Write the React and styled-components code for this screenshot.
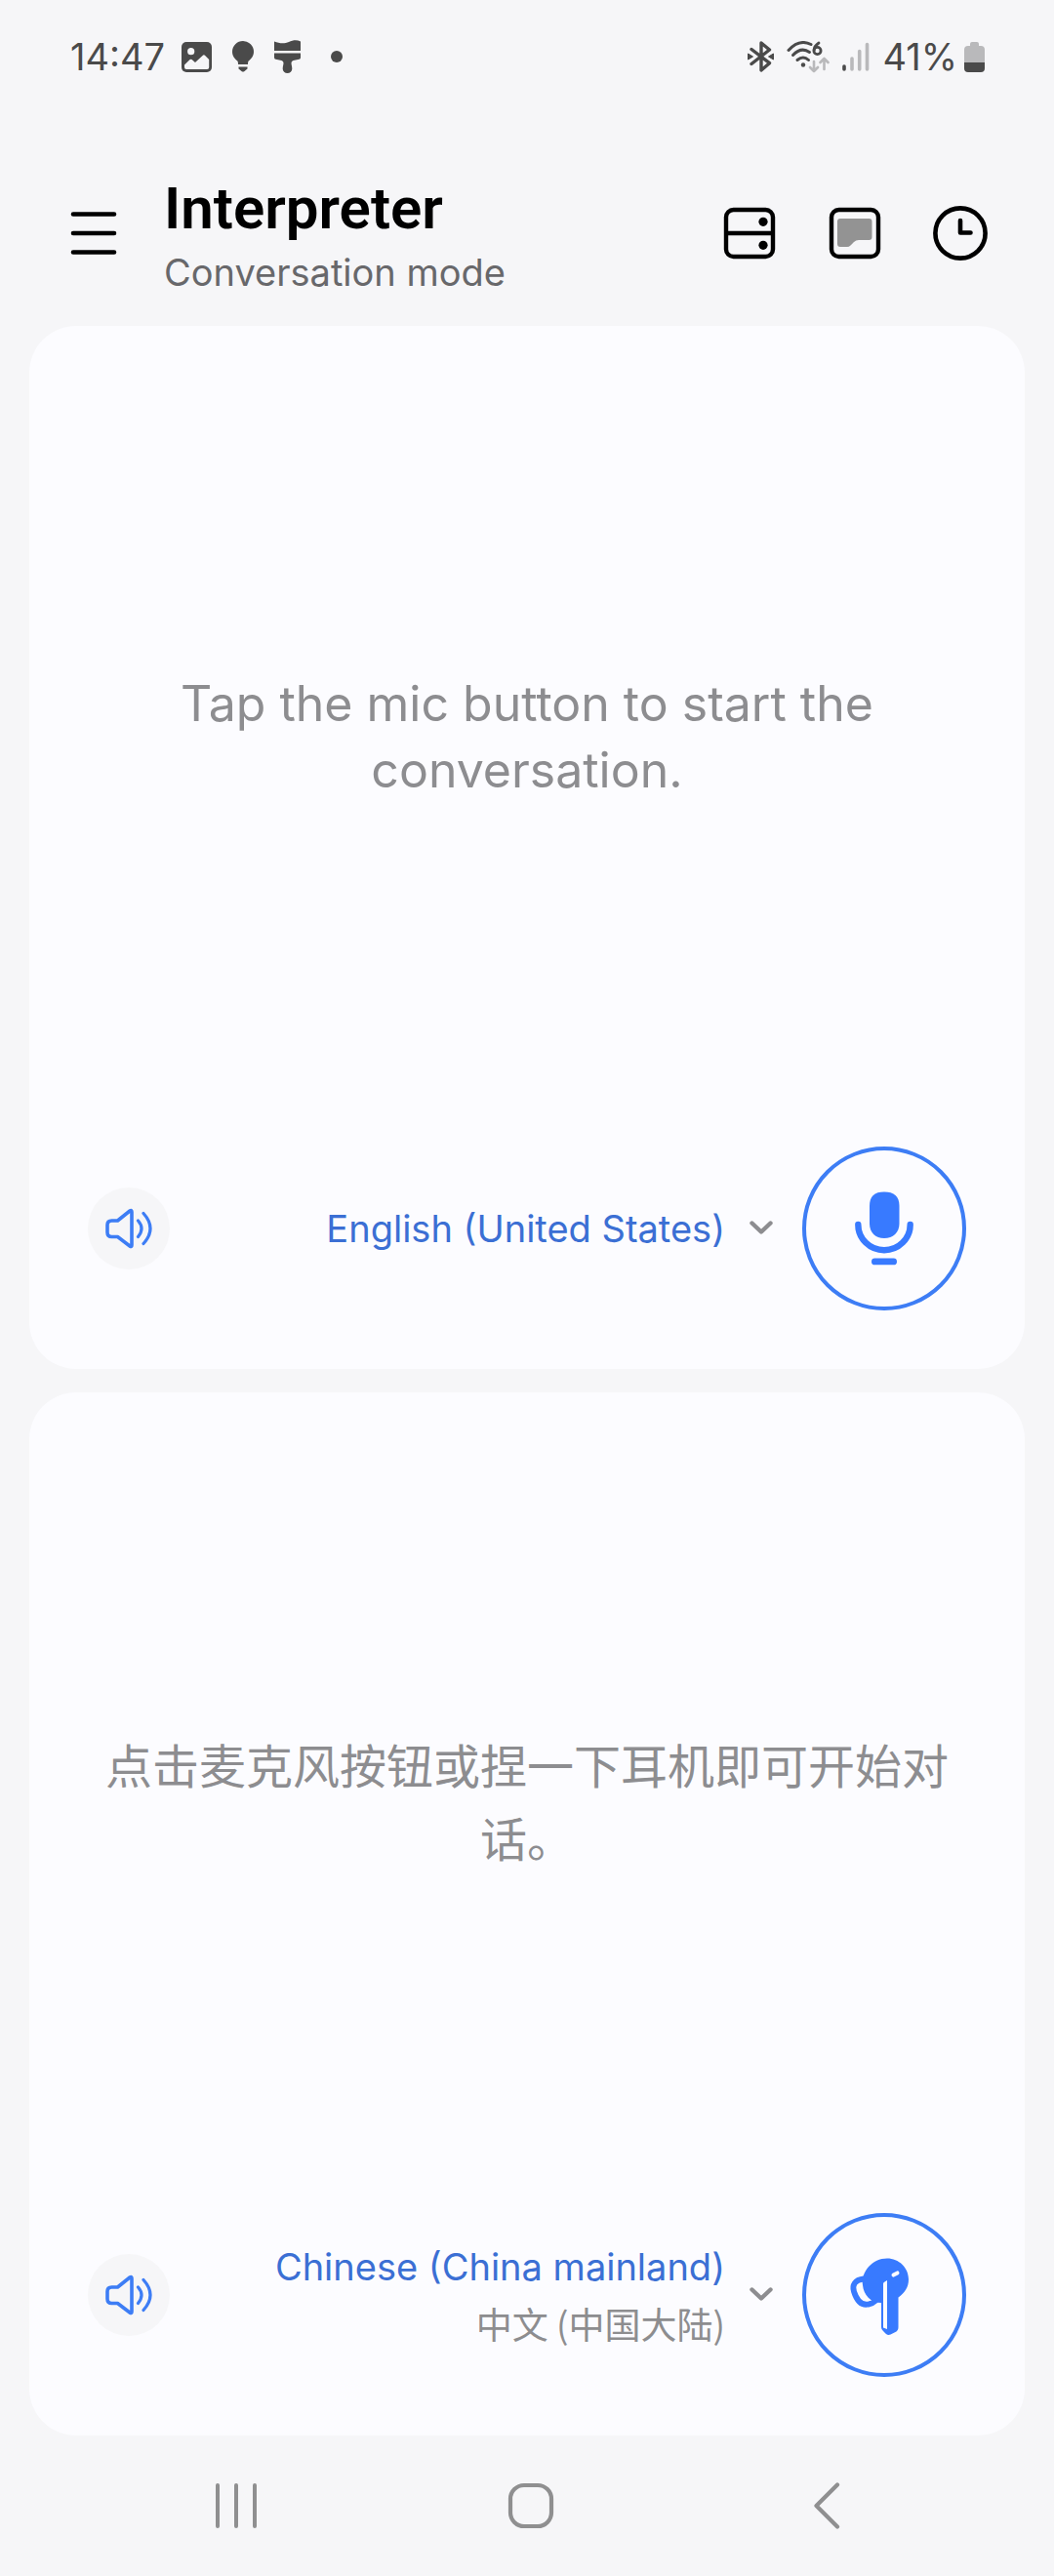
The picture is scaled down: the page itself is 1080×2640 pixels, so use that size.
import React from 'react'
import styled, { createGlobalStyle } from 'styled-components'

const GlobalStyle = createGlobalStyle`
  * {
    box-sizing: border-box;
  }

  body {
    margin: 0;
    background: #f6f6f8;
    font-family: Inter, 'Noto Sans CJK SC', sans-serif;
  }

  button, select {
    margin: 0;
    padding: 0;
    border: 0;
    background: none;
    font: inherit;
    color: inherit;
    cursor: pointer;
  }

  svg {
    display: block;
    flex: none;
  }
`

const Page = styled.div`
  display: flex;
  flex-direction: column;
  min-height: 100vh;
`

const StatusBar = styled.div`
  display: flex;
  align-items: center;
  justify-content: space-between;
  height: 116px;
  padding: 0 71px 0 72px;
  color: #4a4a4a;
  font-size: 38px;
  line-height: 48px;
`

const StatusGroup = styled.div`
  display: flex;
  align-items: center;
  gap: ${({ $gap }) => $gap}px;
`

const Header = styled.header`
  display: flex;
  align-items: center;
  padding: 63px 66px 35px;
`

const IconButton = styled.button`
  display: flex;
  align-items: center;
  justify-content: center;
  width: 60px;
  height: 60px;
`

const Titles = styled.div`
  flex: 1;
  margin-left: 42px;
`

const Title = styled.h1`
  margin: 0 0 10px;
  font-family: Roboto, sans-serif;
  font-size: 60px;
  font-weight: 600;
  line-height: 70px;
  color: #000;
`

const Subtitle = styled.p`
  margin: 0;
  font-size: 38px;
  line-height: 40px;
  color: #68686b;
`

const Actions = styled.div`
  display: flex;
  gap: 48px;
`

const Panels = styled.main`
  display: grid;
  flex: 1;
  grid-auto-rows: 1fr;
  gap: 24px;
  padding: 0 30px;
`

const Panel = styled.section`
  display: flex;
  flex-direction: column;
  padding: 0 60px 60px;
  border-radius: 48px;
  background: #fcfcff;
`

const Message = styled.div`
  display: flex;
  flex: 1;
  align-items: center;
  justify-content: center;
  font-size: ${({ $cjk }) => ($cjk ? 48 : 50)}px;
  line-height: ${({ $cjk }) => ($cjk ? 75 : 68)}px;
  text-align: center;
  color: #8d8d90;
`

const MessageText = styled.p`
  margin: 0;
`

const Controls = styled.div`
  display: flex;
  align-items: center;
`

const SpeakerButton = styled.button`
  display: flex;
  align-items: center;
  justify-content: center;
  width: 84px;
  height: 84px;
  border-radius: 50%;
  background: #f6f6f8;
`

const Language = styled.label`
  display: flex;
  flex: 1;
  align-items: center;
  justify-content: flex-end;
  gap: 25px;
  margin-right: 30px;
`

const LanguageNames = styled.span`
  display: flex;
  flex: 1;
  flex-direction: column;
  gap: 10px;
`

const LanguageSelect = styled.select`
  appearance: none;
  width: 100%;
  height: 48px;
  font-size: 38px;
  line-height: 48px;
  text-align: right;
  text-align-last: right;
  color: #3b6fd4;
`

const NativeName = styled.span`
  font-family: 'Noto Sans CJK SC', sans-serif;
  font-size: 37px;
  line-height: 48px;
  text-align: right;
  color: #8d8d8f;
`

const TalkButton = styled.button`
  display: flex;
  align-items: center;
  justify-content: center;
  width: 168px;
  height: 168px;
  border: 4px solid #3d7df5;
  border-radius: 50%;
`

const NavBar = styled.nav`
  display: grid;
  grid-template-columns: repeat(3, 1fr);
  align-items: center;
  justify-items: center;
  height: 144px;
  padding: 0 82px 0 91px;
`

const PictureIcon = () => (
  <svg width="31" height="31" viewBox="0 0 31 31">
    <rect width="31" height="31" rx="5" fill="#4a4a4a" />
    <circle cx="9.7" cy="9.7" r="3.6" fill="#f6f6f8" />
    <path
      d="M3 23.500l5.600-5.400q1-.9 2 0l3.400 3 7.600-7.200q1.300-1.100 2.600 0l4 4.200V26q0 2-2 2H5q-2 0-2-2z"
      fill="#f6f6f8"
    />
  </svg>
)

const BulbIcon = () => (
  <svg width="22" height="32" viewBox="0 0 22 32" fill="#4a4a4a">
    <path d="M11 0a11 11 0 0 1 11 11c0 4.500-2.500 7.200-5 9.200-.8.700-1 1.600-1 3.800H6c0-2.200-.2-3.100-1-3.800C2.500 18.200 0 15.500 0 11A11 11 0 0 1 11 0z" />
    <path d="M6.500 26.500h9v2l-3 2.500q-1.500 1-3 0l-3-2.500z" />
  </svg>
)

const BrushIcon = () => (
  <svg width="27" height="34" viewBox="0 0 27 34" fill="#4a4a4a">
    <path d="M0 1.500C6 4 11 3.600 15 2c4-1.700 8-2.400 12-.5V11H0z" />
    <path d="M0 13.500h27V18q0 1.500-1.500 1.700l-6 1.200q-2 .5-2 2.500c0 2 .8 3.500.8 6a4.800 4.600 0 0 1-9.600 0c0-2.500.8-4 .8-6q0-2-2-2.500l-6-1.200Q0 19.500 0 18z" />
  </svg>
)

const DotIcon = () => (
  <svg width="22" height="12" viewBox="-10 0 22 12">
    <circle cx="6" cy="6" r="6" fill="#4a4a4a" />
  </svg>
)

const BluetoothIcon = () => (
  <svg width="27" height="32" viewBox="0 0 27 32">
    <path
      d="M4 8.500l18.500 14.200-8.500 7.300V2l8.500 7L4 23.500"
      fill="none"
      stroke="#4a4a4a"
      strokeWidth="3.400"
      strokeLinecap="round"
      strokeLinejoin="round"
    />
    <path d="M.5 13L5.500 16 .5 19zM26.500 13L21.500 16l5 3z" fill="#4a4a4a" stroke="#4a4a4a" strokeLinejoin="round" />
  </svg>
)

const WifiIcon = () => (
  <svg width="44" height="33" viewBox="0 0 44 33" fill="none" strokeLinecap="round" strokeLinejoin="round">
    <g stroke="#4a4a4a" strokeWidth="3">
      <path d="M2 9.500Q13-2.500 25 3.500" />
      <path d="M6.500 14.500Q15 5.500 23.500 11.500" />
      <path d="M11 19.500q6-5 11.500 0" />
      <path d="M33 2c-3 2-4.800 4.800-4.800 7.200" strokeWidth="2.800" />
      <circle cx="31.500" cy="10" r="3.600" strokeWidth="2.800" />
    </g>
    <circle cx="17" cy="24.500" r="2.200" fill="#4a4a4a" />
    <path d="M28 21v10m-4-4l4 4 4-4M38.500 29V18m-4 4l4-4 4 4" stroke="#b9b9bb" strokeWidth="2.600" />
  </svg>
)

const SignalIcon = () => (
  <svg width="28" height="30" viewBox="0 0 28 30" strokeWidth="3.600" strokeLinecap="round">
    <path d="M2 25v3" stroke="#4a4a4a" />
    <path d="M10 17v11M17.700 9.500V28M25.500 2.500V28" stroke="#b9b9bb" />
  </svg>
)

const BatteryIcon = () => (
  <svg width="21" height="31" viewBox="0 0 21 31">
    <path d="M0 21V8q0-4 4-4h2V2q0-2 2-2h5q2 0 2 2v2h2q4 0 4 4v13z" fill="#b9b9bb" />
    <path d="M0 21h21v6q0 4-4 4H4q-4 0-4-4z" fill="#4a4a4a" />
  </svg>
)

const MenuIcon = () => (
  <svg width="48" height="48" viewBox="0 0 48 48">
    <path d="M3 4.500h42M3 24h42M3 43.500h42" stroke="#000" strokeWidth="4.600" strokeLinecap="round" />
  </svg>
)

const SplitIcon = () => (
  <svg width="54" height="54" viewBox="0 0 54 54">
    <rect x="3" y="3" width="48" height="48" rx="7.500" fill="none" stroke="#000" strokeWidth="4.400" />
    <path d="M3 27h48" stroke="#000" strokeWidth="4.400" />
    <circle cx="41" cy="15.300" r="4.600" />
    <circle cx="41" cy="39.300" r="4.600" />
  </svg>
)

const BubbleIcon = () => (
  <svg width="54" height="54" viewBox="0 0 54 54">
    <rect x="3" y="3" width="48" height="48" rx="7.500" fill="none" stroke="#000" strokeWidth="4.400" />
    <path
      d="M9 15q0-3 3-3h29.500q3 0 3 3v16q0 3-3 3H31q-3 0-5 2l-3.500 3.500Q21 41 19 41h-7q-3 0-3-3z"
      fill="#939393"
    />
  </svg>
)

const ClockIcon = () => (
  <svg width="56" height="56" viewBox="0 0 56 56" fill="none" stroke="#000" strokeWidth="4.600">
    <circle cx="28" cy="28" r="25.600" />
    <path d="M28 15v12.500h10.500" strokeLinecap="round" strokeLinejoin="round" />
  </svg>
)

const SpeakerIcon = () => (
  <svg
    width="48"
    height="42"
    viewBox="0 0 48 42"
    fill="none"
    stroke="#3d7df5"
    strokeWidth="3.600"
    strokeLinecap="round"
    strokeLinejoin="round">
    <path d="M6.500 13H12.500L25 3q2-1.500 2 1V38q0 2.500-2 1L12.500 29.500H6.500Q2 29.500 2 25V17.500Q2 13 6.500 13z" />
    <path d="M33.500 13q7 8 0 16.500M39 5.500q14 15.500 0 31" strokeWidth="3.200" />
  </svg>
)

const ChevronIcon = () => (
  <svg width="24" height="20" viewBox="0 0 24 20">
    <path
      d="M2.500 4.500L12 13.500l9.500-9"
      fill="none"
      stroke="#8d8d90"
      strokeWidth="4.400"
      strokeLinecap="round"
      strokeLinejoin="round"
    />
  </svg>
)

const MicIcon = () => (
  <svg width="60" height="76" viewBox="0 0 60 76" fill="#387aff">
    <path d="M15 15C15 5 20 .500 30 .500S45.500 5 45.500 15v18C45.500 42 39 48 30 48S15 42 15 33z" />
    <path
      d="M3.300 34a26.700 26.200 0 0 0 53.400 0"
      fill="none"
      stroke="#387aff"
      strokeWidth="6.400"
      strokeLinecap="round"
    />
    <rect x="17" y="68.500" width="26" height="6.800" rx="3.400" />
  </svg>
)

const EarbudIcon = () => (
  <svg width="72" height="84" viewBox="0 -4 72 84">
    <path
      d="M15 21.500C6 22.500 2.800 28 5 34.500 8 44 13 49 20 47.500q4-.500 7-3.500"
      fill="none"
      stroke="#387aff"
      strokeWidth="5.800"
      strokeLinecap="round"
    />
    <path
      d="M39 .500C51 .500 61 10 61 22c0 8-4 14-10.500 18.500V71q0 3.500-3 5l-5 2.500q-2.500 1-4.500-.500l-3-3q-2-1.500-2-4V46C22 46 15 38 14 28 12 14 24 .500 39 .500z"
      fill="#387aff"
    />
    <path d="M35 71.500V26.500q0-1 1.200-1.700l2.800-1.700v50z" fill="#fcfcff" />
    <path d="M45.500 17.600l4-2.200" stroke="#fcfcff" strokeWidth="4" strokeLinecap="round" />
  </svg>
)

const RecentsIcon = () => (
  <svg width="44" height="48" viewBox="0 0 44 48">
    <path d="M3 3v42M22 3v42M41 3v42" stroke="#8f8f90" strokeWidth="4" strokeLinecap="round" />
  </svg>
)

const HomeIcon = () => (
  <svg width="48" height="48" viewBox="0 0 48 48">
    <rect x="3" y="3" width="42" height="42" rx="14" fill="none" stroke="#8f8f90" strokeWidth="4.200" />
  </svg>
)

const BackIcon = () => (
  <svg width="28" height="48" viewBox="0 0 28 48">
    <path
      d="M25 2.500L3.500 24 25 45.500"
      fill="none"
      stroke="#8f8f90"
      strokeWidth="4.200"
      strokeLinecap="round"
      strokeLinejoin="round"
    />
  </svg>
)

const panels = [
  {
    id: 'english',
    lang: 'en',
    message: 'Tap the mic button to start the conversation.',
    language: 'English (United States)',
    TalkIcon: MicIcon
  },
  {
    id: 'chinese',
    lang: 'zh-CN',
    message: '点击麦克风按钮或捏一下耳机即可开始对话。',
    language: 'Chinese (China mainland)',
    nativeName: '中文 (中国大陆)',
    TalkIcon: EarbudIcon
  }
]

const ConversationPanel = ({ id, lang, message, language, nativeName, TalkIcon }) => (
  <Panel>
    <Message $cjk={lang === 'zh-CN'} lang={lang}>
      <MessageText>{message}</MessageText>
    </Message>
    <Controls>
      <SpeakerButton aria-label="Speaker">
        <SpeakerIcon />
      </SpeakerButton>
      <Language htmlFor={id}>
        <LanguageNames>
          <LanguageSelect id={id} aria-label="Language">
            <option>{language}</option>
          </LanguageSelect>
          {nativeName && <NativeName lang={lang}>{nativeName}</NativeName>}
        </LanguageNames>
        <ChevronIcon />
      </Language>
      <TalkButton aria-label="Talk">
        <TalkIcon />
      </TalkButton>
    </Controls>
  </Panel>
)

const App = () => (
  <Page>
    <GlobalStyle />
    <StatusBar>
      <StatusGroup $gap={17}>
        <span>14:47</span>
        <StatusGroup $gap={21}>
          <PictureIcon />
          <BulbIcon />
          <BrushIcon />
          <DotIcon />
        </StatusGroup>
      </StatusGroup>
      <StatusGroup $gap={13}>
        <BluetoothIcon />
        <WifiIcon />
        <SignalIcon />
        <StatusGroup $gap={7}>
          <span>41%</span>
          <BatteryIcon />
        </StatusGroup>
      </StatusGroup>
    </StatusBar>
    <Header>
      <IconButton aria-label="Menu">
        <MenuIcon />
      </IconButton>
      <Titles>
        <Title>Interpreter</Title>
        <Subtitle>Conversation mode</Subtitle>
      </Titles>
      <Actions>
        <IconButton aria-label="Split view">
          <SplitIcon />
        </IconButton>
        <IconButton aria-label="Conversation view">
          <BubbleIcon />
        </IconButton>
        <IconButton aria-label="History">
          <ClockIcon />
        </IconButton>
      </Actions>
    </Header>
    <Panels>
      {panels.map((panel) => (
        <ConversationPanel key={panel.id} {...panel} />
      ))}
    </Panels>
    <NavBar>
      <IconButton aria-label="Recents">
        <RecentsIcon />
      </IconButton>
      <IconButton aria-label="Home">
        <HomeIcon />
      </IconButton>
      <IconButton aria-label="Back">
        <BackIcon />
      </IconButton>
    </NavBar>
  </Page>
)

export default App
